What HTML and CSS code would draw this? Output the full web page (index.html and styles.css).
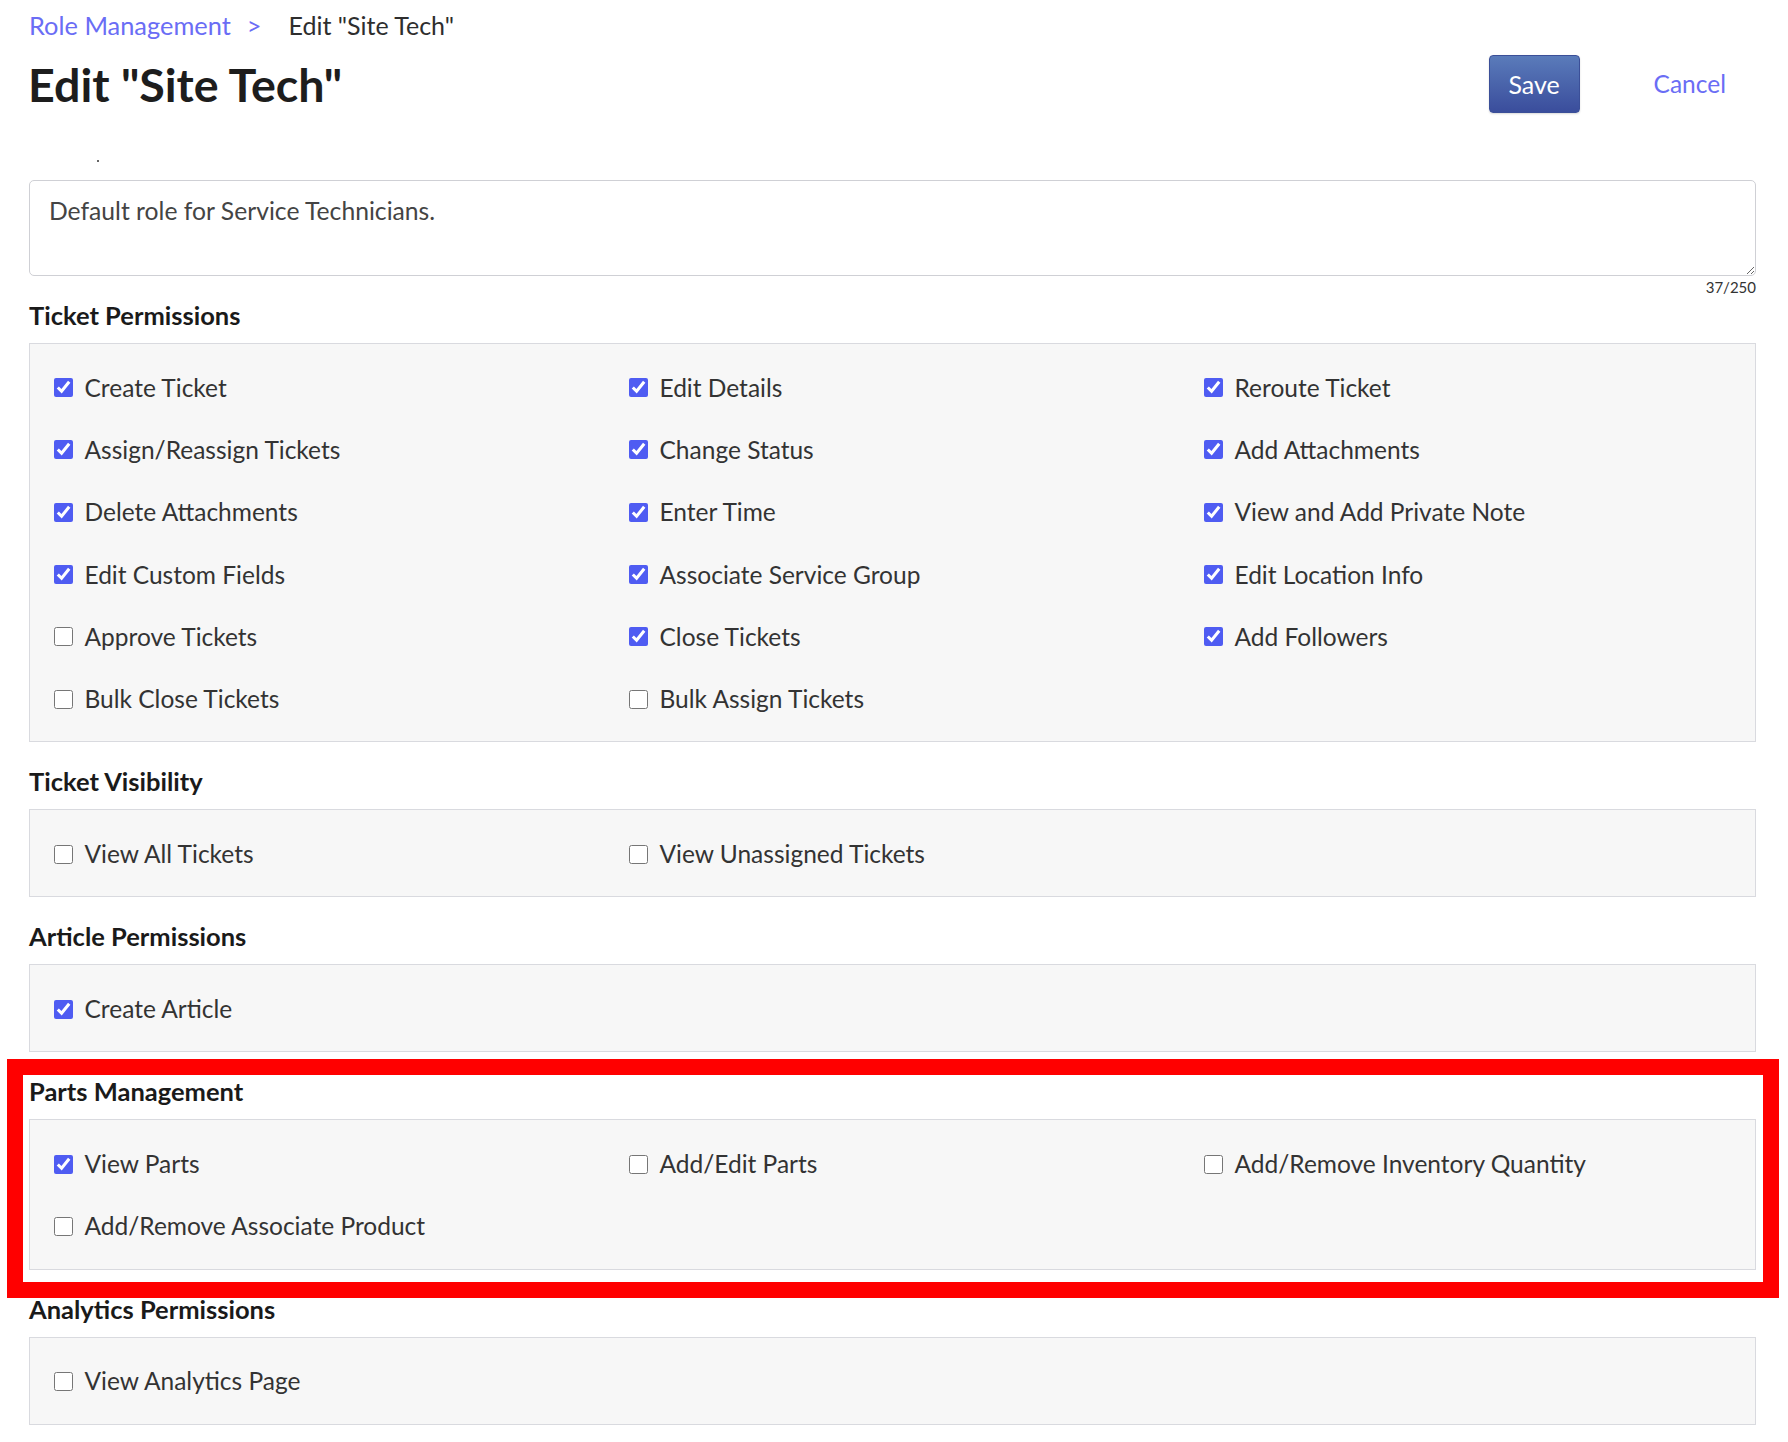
FILE: index.html
```html
<!DOCTYPE html>
<html lang="en">
<head>
<meta charset="utf-8">
<title>Edit "Site Tech"</title>
<link rel="stylesheet" href="styles.css">
</head>
<body>
<div class="page">
  <nav class="breadcrumb">
    <a class="crumb-link" href="#">Role Management</a>
    <span class="crumb-sep">&gt;</span>
    <span class="crumb-current">Edit "Site Tech"</span>
  </nav>

  <header class="page-header">
    <h1 class="title">Edit "Site Tech"</h1>
    <div class="actions">
      <button class="btn-save" type="button">Save</button>
      <a class="btn-cancel" href="#">Cancel</a>
    </div>
  </header>

  <div class="label-row"><span class="label-dot"></span></div>

  <textarea class="desc" rows="2">Default role for Service Technicians.</textarea>
  <div class="counter">37/250</div>

  <section class="perm-section first">
    <h2 class="perm-heading">Ticket Permissions</h2>
    <div class="perm-box">
      <label class="perm"><input type="checkbox" checked><span>Create Ticket</span></label>
      <label class="perm"><input type="checkbox" checked><span>Edit Details</span></label>
      <label class="perm"><input type="checkbox" checked><span>Reroute Ticket</span></label>
      <label class="perm"><input type="checkbox" checked><span>Assign/Reassign Tickets</span></label>
      <label class="perm"><input type="checkbox" checked><span>Change Status</span></label>
      <label class="perm"><input type="checkbox" checked><span>Add Attachments</span></label>
      <label class="perm"><input type="checkbox" checked><span>Delete Attachments</span></label>
      <label class="perm"><input type="checkbox" checked><span>Enter Time</span></label>
      <label class="perm"><input type="checkbox" checked><span>View and Add Private Note</span></label>
      <label class="perm"><input type="checkbox" checked><span>Edit Custom Fields</span></label>
      <label class="perm"><input type="checkbox" checked><span>Associate Service Group</span></label>
      <label class="perm"><input type="checkbox" checked><span>Edit Location Info</span></label>
      <label class="perm"><input type="checkbox"><span>Approve Tickets</span></label>
      <label class="perm"><input type="checkbox" checked><span>Close Tickets</span></label>
      <label class="perm"><input type="checkbox" checked><span>Add Followers</span></label>
      <label class="perm"><input type="checkbox"><span>Bulk Close Tickets</span></label>
      <label class="perm"><input type="checkbox"><span>Bulk Assign Tickets</span></label>
    </div>
  </section>

  <section class="perm-section">
    <h2 class="perm-heading">Ticket Visibility</h2>
    <div class="perm-box">
      <label class="perm"><input type="checkbox"><span>View All Tickets</span></label>
      <label class="perm"><input type="checkbox"><span>View Unassigned Tickets</span></label>
    </div>
  </section>

  <section class="perm-section">
    <h2 class="perm-heading">Article Permissions</h2>
    <div class="perm-box">
      <label class="perm"><input type="checkbox" checked><span>Create Article</span></label>
    </div>
  </section>

  <section class="perm-section">
    <h2 class="perm-heading">Parts Management</h2>
    <div class="perm-box">
      <label class="perm"><input type="checkbox" checked><span>View Parts</span></label>
      <label class="perm"><input type="checkbox"><span>Add/Edit Parts</span></label>
      <label class="perm"><input type="checkbox"><span>Add/Remove Inventory Quantity</span></label>
      <label class="perm"><input type="checkbox"><span>Add/Remove Associate Product</span></label>
    </div>
  </section>

  <section class="perm-section">
    <h2 class="perm-heading">Analytics Permissions</h2>
    <div class="perm-box">
      <label class="perm"><input type="checkbox"><span>View Analytics Page</span></label>
    </div>
  </section>

  <div class="highlight"></div>
</div>
</body>
</html>
```
FILE: styles.css
```css
* { box-sizing: border-box; }

html, body {
  margin: 0;
  background: #ffffff;
}

body {
  font-family: Lato, "Open Sans", "Liberation Sans", sans-serif;
  color: #333333;
}

.page {
  position: relative;
  padding: 10px 32px 40px 29px;
}

/* Breadcrumb */
.breadcrumb {
  display: flex;
  align-items: baseline;
  font-size: 25.4px;
  line-height: 30px;
}
.crumb-link {
  color: #6a6df5;
  text-decoration: none;
}
.crumb-sep {
  color: #6a6df5;
  margin: 0 27px 0 16px;
}
.crumb-current {
  color: #2e2e2e;
  font-size: 25px;
}

/* Header */
.page-header {
  display: flex;
  align-items: center;
  justify-content: space-between;
  margin-top: 15px;
  height: 58px;
}
.title {
  margin: 0 0 0 -1px;
  font-size: 46.6px;
  line-height: 54px;
  font-weight: 700;
  color: #1d1d1d;
}
.actions {
  display: flex;
  align-items: center;
}
.btn-save {
  width: 91px;
  height: 58px;
  border: 1px solid #3b4f98;
  border-radius: 4px;
  background: linear-gradient(#5a7bba, #3a4d9c);
  color: #ffffff;
  font-family: inherit;
  font-size: 25px;
  padding: 0;
  box-shadow: 0 1px 2px rgba(0, 0, 0, 0.15);
}
.btn-cancel {
  margin-left: 44px;
  padding: 0 30px;
  color: #6a6df5;
  text-decoration: none;
  font-size: 24.5px;
  line-height: 58px;
}

/* Description */
.label-row {
  height: 67px;
  padding: 47px 0 0 68px;
}
.label-dot {
  display: block;
  width: 2px;
  height: 2px;
  background: #666666;
}
.desc {
  display: block;
  width: 100%;
  height: 96px;
  margin: 0;
  padding: 15px 19px;
  border: 1px solid #cfd0d5;
  border-radius: 5px;
  font-family: inherit;
  font-size: 24.7px;
  line-height: 30px;
  color: #444444;
  background: #ffffff;
  resize: vertical;
}
.counter {
  margin-top: 2px;
  text-align: right;
  font-size: 15px;
  line-height: 18px;
  color: #333333;
}

/* Permission sections */
.perm-section {
  margin-top: 24.2px;
}
.perm-section.first {
  margin-top: 4px;
}
.perm-heading {
  margin: 0 0 13px;
  font-size: 25.5px;
  line-height: 30px;
  font-weight: 700;
  color: #1a1a1a;
}
.perm-box {
  display: grid;
  grid-template-columns: repeat(3, 1fr);
  padding: 12.5px 0 11px;
  border: 1px solid #d9dadf;
  background: #f7f7f7;
}
.perm {
  display: flex;
  align-items: center;
  height: 62.3px;
  padding-left: 24px;
  font-size: 24.5px;
  line-height: 30px;
  color: #333333;
}
.perm input {
  width: 19px;
  height: 19px;
  margin: 0 11.5px 0 0;
  accent-color: #4f5cf2;
  flex: none;
}

/* Annotation overlay */
.highlight {
  position: absolute;
  left: 7px;
  top: 1059px;
  width: 1772px;
  height: 239px;
  border: 16px solid #ff0000;
  pointer-events: none;
}
```
